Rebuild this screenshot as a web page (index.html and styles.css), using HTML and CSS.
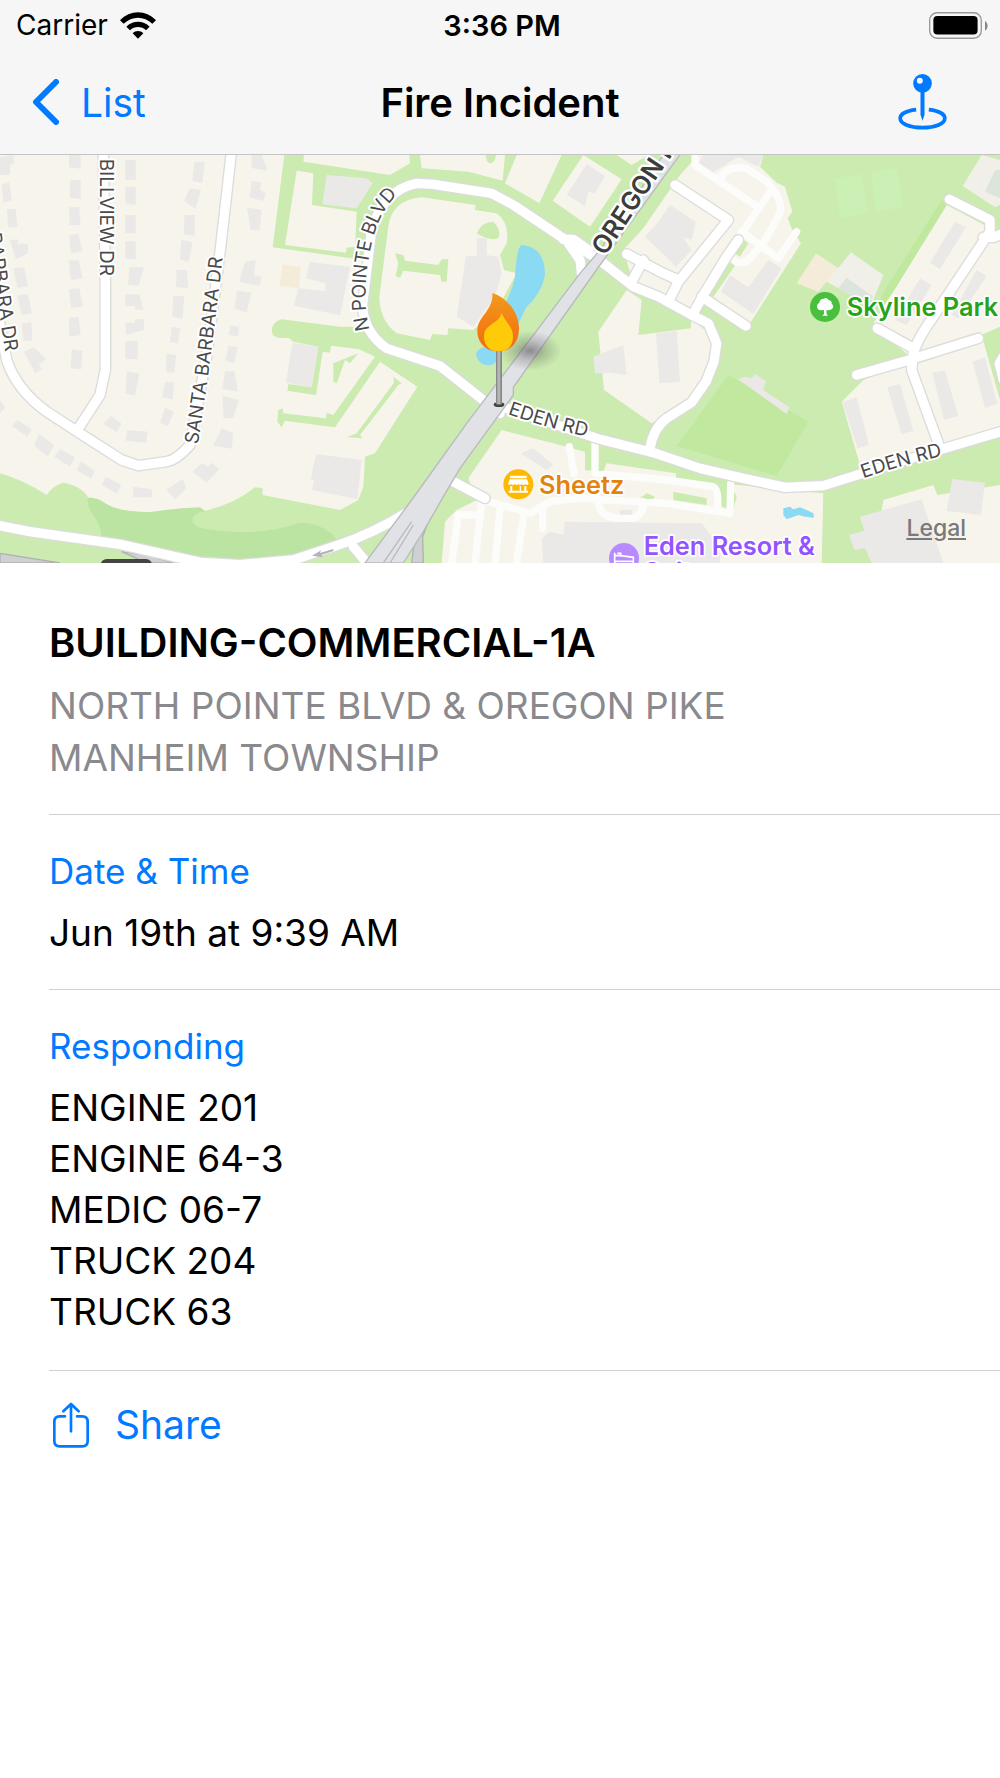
FILE: index.html
```html
<!DOCTYPE html>
<html lang="en">
<head>
<meta charset="utf-8">
<meta name="viewport" content="width=device-width, initial-scale=1">
<title>Fire Incident</title>
<link rel="stylesheet" href="styles.css">
</head>
<body>
<header class="top">
  <div class="status">
    <span class="carrier">Carrier
      <svg class="wifi" viewBox="0 0 108 80" aria-hidden="true"><path d="M0 24C30-8 78-8 108 24L97 35C72 11 36 11 11 35ZM19 44C38 24 70 24 89 44L78 54C64 41 44 41 30 54ZM38 63C47 54 61 54 70 63L54 80Z"/></svg>
    </span>
    <time class="clock">3:36 PM</time>
    <svg class="battery" viewBox="0 0 176 80" role="img" aria-label="Battery full"><rect x="2" y="2" width="154" height="76" rx="22" fill="none" stroke="#999" stroke-width="4"/><rect x="13" y="12" width="132" height="55" rx="12"/><path d="M167 26Q175 32 175 41T167 56Z" fill="#888"/></svg>
  </div>
  <nav class="bar">
    <a class="back" href="#list"><svg class="chevron" viewBox="0 0 27 46" aria-hidden="true"><path d="M24 3L4 23L24 43"/></svg>List</a>
    <h1 class="title">Fire Incident</h1>
    <button class="locate" type="button" aria-label="Show pin on map"><svg viewBox="0 0 146 168" aria-hidden="true"><path d="M54 107C20 111 6 122 6 133C6 149 34 161 73 161S140 149 140 133C140 122 126 111 92 107" fill="none" stroke="currentColor" stroke-width="11"/><path d="M67 52H79V122L73 140L67 122Z"/><circle cx="73" cy="28" r="28"/><circle cx="65" cy="20" r="9" fill="#f6f6f6"/></svg></button>
  </nav>
</header>

<main>
<section class="map" aria-label="Incident map">
<svg class="canvas" viewBox="0 15 3000 1224" preserveAspectRatio="xMidYMid slice">
  <defs>
    <g id="streets">
      <path d="M695 0L662 290L620 620L570 885Q530 930 500 935L415 947L365 930L240 850L140 785Q50 720 20 630L-20 420"/>
      <path d="M310 0L316 400V660L300 735L232 840"/>
      <path d="M-10 1125L90 1145L360 1183L600 1237L720 1244L880 1230L1010 1187Q1120 1150 1225 1085L1260 1050"/>
      <path d="M1500 790L1320 648L1160 595Q1095 550 1087 470L1115 240Q1150 120 1250 100L1300 103L1475 130L1540 165L1690 265L1790 325L1830 355L1900 410L1975 440L2075 495L2125 520L2150 580L2142 635L2118 695L2075 757L2000 805Q1960 835 1950 895"/>
      <path d="M1460 755L1550 785L1800 868L1960 908L2100 955L2230 985L2355 1012L2470 1007L2700 935L3020 840"/>
      <path d="M1690 268L1720 268L1765 300M1705 280L1740 330L1745 370"/>
      <path d="M1880 312L1990 370L2035 390M1930 330L1895 395M2025 105L2185 210L2035 395L2010 445M2215 270L2180 320L2110 435L2080 490M2105 440L2238 528"/>
      <path d="M2848 148L2970 210V245L2800 500Q2750 570 2740 610L2735 660L2815 880M2632 535L2740 595M2570 675L2720 632L2935 565M2950 262H2980L3010 250M3010 620L2998 640L3010 690"/>
      <path d="M1360 995L1455 1045M1060 1190L1110 1250"/>
    </g>
    <g id="lanes">
      <path d="M2085 20V45L2160 95L2265 165M2160 95Q2170 45 2240 55L2300 95Q2350 145 2340 190L2290 280L2240 335Q2210 345 2190 320M2315 120L2190 300M2225 245L2335 325L2390 245"/>
      <path d="M1450 1050L1590 1090L1650 1055L1740 1045L2000 1060L2190 1090L2192 1000M1785 880V970L2000 990L2140 1010Q2160 1020 2150 1085M1708 890L1722 970M1445 1055L1425 1240M1500 1080L1485 1240M1570 1100L1550 1240M1430 1095H1375L1355 1240M1628 1080V1135M1790 1040Q1795 1105 1860 1105H1900Q1930 1095 1930 1055"/>
    </g>
    <path id="pointe" d="M1108 540Q1080 420 1120 260Q1155 145 1230 108"/>
    <path id="barbara" d="M593 884Q625 700 672 288"/>
    <path id="barbara-west" d="M-70 0Q-15 420 16 606"/>
    <path id="oregon" d="M1815 320L2060 -50"/>
    <path id="eden-west" d="M1523 792Q1640 834 1780 865"/>
    <path id="eden-east" d="M2590 985Q2720 940 2840 915"/>
    <linearGradient id="flame" x1="0" y1="0" x2="0" y2="1"><stop offset="0" stop-color="#f29a1c"/><stop offset="1" stop-color="#f26a10"/></linearGradient>
    <radialGradient id="shade"><stop offset="0" stop-color="#444" stop-opacity=".55"/><stop offset=".5" stop-color="#555" stop-opacity=".25"/><stop offset="1" stop-color="#555" stop-opacity="0"/></radialGradient>
  </defs>

  <rect class="land" width="3000" height="1260"/>
  <path class="grass" d="M853 15L818 292L1108 332L1100 530L1020 530L845 508Q815 515 815 545Q818 568 865 563L880 575L955 590L935 712L865 702L862 722L948 735L968 605L990 608L993 587L1075 597L1125 620L1000 795L980 788L978 805L850 790L848 775L835 780L832 815L845 832L855 812L1005 832L1140 635L1252 710L1125 910L1095 920L1090 1010L1075 1050L1020 1080L787 1035L788 1015L765 1012Q700 1065 610 1083L445 1087L350 1080L300 1050L265 1045Q250 1010 190 998Q160 1005 140 1035Q70 990 0 970V1239H3000V15Z"/>
  <path class="wood" d="M262 1045Q270 1038 300 1050Q340 1085 445 1087Q520 1075 600 1072L615 1083Q580 1090 577 1110Q580 1135 640 1140Q780 1160 900 1118Q980 1120 1010 1175L900 1220L600 1230L305 1160Q300 1120 280 1095Q262 1070 262 1045ZM990 1145L1015 1175L990 1190Z"/>

  <g class="land" transform="translate(990)">
    <path d="M-78 15L-80 35L180 75L240 40L238 15ZM-100 62L-50 70L-54 165L80 185L75 290L50 293L48 308L-135 285ZM270 15H525L518 92L415 65L275 55ZM560 15H695L628 160L525 100ZM760 15L875 88L780 230L668 152ZM860 15H955L905 45Z"/>
    <path d="M275 142L437 165L435 180L500 190Q540 220 530 280L510 315L522 360L560 370L500 480L430 540L355 535L352 555L307 552L300 570L200 550Q148 510 148 440L175 230Q185 150 275 142Z"/>
    <path d="M890 420L935 450L925 555L1083 535V505L1160 570L1150 640L1090 745L965 820L822 720L805 545Z"/>
    <path d="M515 840L670 880L765 905V960L1480 1030L1475 1239H335L345 1115L380 1080L440 1050L415 985Z"/>
  </g>
  <g class="land" transform="translate(1980)">
    <path d="M-110 300L-50 235L60 75L115 15H310L300 50L350 98L375 110L397 185L383 205L395 235L423 280L270 520L160 440L95 490L-80 400Z"/>
    <path d="M860 165L1020 250V530L965 555L1020 750V850L600 945L545 755L610 690L760 630L640 520Z"/>
    <path d="M670 1050L820 1005L832 1035L1020 1005V1239H640Z"/>
  </g>
  <g class="grass">
    <path d="M1185 310L1210 315L1215 332L1315 345L1325 328L1345 328L1340 395H1325L1320 375L1210 362L1200 383L1187 378L1195 340ZM1430 250Q1445 215 1480 215Q1505 240 1495 265Q1470 275 1430 250ZM1458 15H1488Q1485 40 1470 40Q1458 38 1458 15ZM1790 900L2190 1000L2210 1040L2200 1080L2165 1070L2160 1020L1800 965Z"/>
    <path d="M2100 430L2185 320L2210 340L2140 440ZM2195 305L2220 262L2245 280L2220 320ZM1900 1060L1940 1030L1965 1040L1945 1060ZM2020 1025L2120 1045V1065L2020 1050Z"/>
    <path d="M1000 640L1075 610L1050 640L1035 630L1010 700L1000 695ZM1180 680L1205 700L1195 705L1080 855L1088 865L1040 862L1070 850L1182 698Z"/>
  </g>
  <path class="land" d="M1820 940L2028 970V985L1810 965Z"/>
  <g class="field"><path d="M2185 675L2425 815L2330 978L2030 888ZM2825 150L2840 165L2680 425L2640 480L2645 435Z"/></g>
  <path class="court" d="M2505 85L2583 72L2605 190L2520 203ZM2612 68L2690 55L2710 172L2628 184Z"/>
  <path class="sand" d="M2448 310L2520 358L2480 395L2455 425L2390 400ZM848 343L902 350L897 415L838 408Z"/>
  <path class="plaza" d="M2553 307L2650 375L2620 450L2580 450L2480 395ZM2945 15L3000 30V165L2985 172L2888 108Z"/>
  <path class="pool" d="M2540 383L2620 440L2600 460L2515 415ZM2985 60H3000V145L2955 125Z"/>

  <g class="house">
    <path d="M0 22L41 15V42L30 44V75H0ZM4 105L28 97L35 150L11 158ZM20 177H47L53 230L25 233ZM30 270L55 268L52 285L62 280L84 283V310L48 328ZM40 355L72 352L84 408L52 413ZM52 436L84 433L96 490L65 495ZM65 520L94 517L97 572H70ZM72 605L102 592L138 627L116 643L126 658L105 670ZM0 750L16 772L0 790ZM52 810L95 838L82 860L36 828ZM117 852L162 885L143 920L102 885ZM180 897L224 922L210 950L163 920ZM243 933L284 962L274 986L230 960ZM318 980L364 1005L350 1030L304 1005ZM400 1010L456 1018V1042H400Z"/>
    <path d="M207 15H242V56L207 52ZM210 90H242V147L209 143ZM207 172L237 171L242 226L209 225ZM207 257L235 250L248 303L213 310ZM206 332L236 330L248 385L213 390ZM207 418L238 415L248 470L213 474ZM206 503L236 500L242 555L209 560ZM216 598L248 603L243 658L211 655ZM376 30H407V90H376ZM376 110H407V165L376 160ZM376 195H407V250H376ZM376 274H407V328H376ZM388 352H432L415 407L384 404ZM376 433H418L431 480L404 477V468H376ZM376 517L405 520V508H432V540L378 555ZM376 573H413V628H376ZM381 665L418 670L405 737L376 730ZM333 798L364 820L350 847L310 822ZM381 840L443 845L438 878L377 872Z"/>
    <path d="M584 36H614L607 98L577 93ZM570 115L603 120L586 176L552 152ZM553 195H584V257L552 253ZM544 270L577 277L566 337L540 328ZM530 360H560L565 415L528 411ZM520 438H553L547 507L516 500ZM515 530L541 535L534 580L510 577ZM500 611L529 615L523 668L498 665ZM495 695L522 698L518 748L487 742ZM495 773L522 785L503 829L480 818ZM548 987L558 1015L525 1048L499 1020ZM605 939L625 950L635 938L657 957L620 998L578 965Z"/>
    <path d="M755 15H785L803 62L755 54ZM755 92L784 97L780 120L798 130L790 153L748 142ZM741 172L785 180L779 240H752ZM735 335L767 330L762 375L785 380L780 408L718 395ZM711 422L754 428L740 488L704 475ZM692 525L717 530L714 560L686 554ZM685 587L713 592L702 640L677 632ZM675 664H704L713 724L667 718ZM668 738L717 750L699 804H670ZM665 835L700 850L695 896L639 887ZM980 75L1100 85L1118 100L1070 175L967 163ZM930 336L1050 350L1020 495L882 468L895 415L975 424L978 400L918 385ZM877 578L955 590L935 712L858 698ZM948 912L1085 930L1072 1048L936 1020L942 990L932 987Z"/>
    <path d="M1430 265H1460V315L1495 320L1505 370L1485 440L1420 530L1370 500L1398 318H1430ZM1760 42L1815 78L1785 130L1765 125L1755 168L1700 135ZM1780 620L1870 585L1880 675L1830 668L1785 670ZM1968 550L2030 543L2040 695L1978 700ZM1600 895L1660 945L1640 960L1562 910ZM990 350L1047 355L1020 495L990 490Z"/>
    <path d="M2010 165L2087 215L2075 270L2050 262L2075 300L2028 350L1935 260L1975 215ZM2190 375L2245 412L2305 330L2345 355L2260 492L2163 425ZM2110 15H2290L2275 50L2215 20L2138 68L2095 40ZM1625 1165L1650 1145L1690 1155L1695 1115L2105 1120L2160 1190V1239H1630ZM1860 1080H1895V1130H1860Z"/>
    <path d="M2865 215L2898 232L2820 357L2790 338ZM2760 385L2795 405L2720 525L2685 510ZM2930 360L2960 378L2875 505L2855 495ZM2527 755L2570 742L2607 885L2573 895ZM2662 712L2700 702L2740 842L2705 853ZM2797 668L2835 662L2875 798L2832 810ZM2918 635L2955 622L2992 762L2955 773ZM2235 680L2255 685L2265 672L2297 693L2290 720L2368 772L2360 792L2215 688ZM2580 1100L2765 1048L2830 1239H2615L2595 1195L2563 1200L2548 1155L2593 1142ZM2857 987L2955 998L2942 1095L2840 1083Z"/>
  </g>
  <path class="water" d="M1565 285Q1635 290 1635 375Q1625 430 1580 470L1550 530L1505 480Q1535 430 1545 380Q1550 290 1565 285ZM1428 610Q1445 580 1500 590V625Q1475 655 1450 643Q1430 635 1428 610ZM2350 1075L2370 1070L2380 1078L2400 1072L2420 1080L2440 1090L2442 1103L2415 1100L2395 1095L2360 1108L2350 1095Z"/>

  <use href="#lanes" class="lane"/>
  <path class="ramp" d="M1245 1160L1235 1239H1270L1268 1160L1310 1050ZM0 1210L180 1239H0ZM365 1205L440 1215L520 1239H440Z"/>
  <use href="#streets" class="street-edge"/>
  <use href="#streets" class="street"/>
  <path class="trunk" d="M1095 1239L1235 1050L1400 820L1740 370L1800 300L2000 0L2050 0L1800 345L1540 712V735L1380 955L1330 1040L1270 1145L1210 1239ZM1150 1239L1235 1115M1170 1239L1240 1125"/>
  <path class="arrow" d="M1000 1197L960 1209L963 1201L936 1217L969 1222L964 1215L1000 1203Z"/>
  <rect x="302" y="1227" width="154" height="40" rx="18" fill="#444"/>

  <g class="road-name">
    <text transform="translate(300 26) rotate(90)">BILLVIEW DR</text>
    <text><textPath href="#barbara">SANTA BARBARA DR</textPath></text>
    <text><textPath href="#barbara-west" startOffset="100%" text-anchor="end">BARBARA DR</textPath></text>
    <text><textPath href="#pointe">N POINTE BLVD</textPath></text>
    <text><textPath href="#eden-west">EDEN RD</textPath></text>
    <text><textPath href="#eden-east">EDEN RD</textPath></text>
  </g>
  <text class="route-name"><textPath href="#oregon">OREGON PIKE</textPath></text>

  <ellipse cx="1590" cy="602" rx="95" ry="60" fill="url(#shade)"/>
  <ellipse cx="1497" cy="764" rx="16" ry="7" fill="#444"/>
  <rect x="1488" y="595" width="18" height="168" fill="#888"/><rect x="1492" y="595" width="9" height="168" fill="#b5b5b5"/>
  <path fill="url(#flame)" d="M1477 429C1525 445 1557 490 1557 535C1557 580 1530 604 1495 604C1460 604 1432 580 1432 542C1432 500 1482 480 1477 429Z"/>
  <path fill="#ffcb08" d="M1505 489C1516 517 1539 530 1539 560C1539 590 1520 604 1496 604C1470 604 1452 588 1452 560C1452 520 1495 525 1505 489Z"/>

  <g class="place">
    <circle cx="1555" cy="1003" r="45" fill="#ffb800"/>
    <path fill="#fff" d="M1530 977H1580V985H1530ZM1529 988H1581L1586 1001Q1581 1008 1576 1002Q1570 1008 1565 1002Q1560 1008 1555 1002Q1550 1008 1545 1002Q1539 1008 1534 1002Q1529 1008 1524 1001ZM1531 1009H1537V1022H1559V1009H1563V1022H1573V1009H1579V1022H1584V1028H1526V1022H1531Z"/>
    <text x="1617" y="1031" fill="#e2830e">Sheetz</text>
    <circle cx="2475" cy="471" r="45" fill="#48bf3d"/>
    <path fill="#fff" d="M2472 492V480Q2450 484 2451 468Q2452 460 2458 458Q2460 446 2471 446Q2480 440 2486 450Q2496 452 2495 461Q2502 466 2498 475Q2492 483 2479 480L2480 492L2484 497H2467Z"/>
    <text x="2540" y="499" fill="#27a31a">Skyline Park</text>
    <circle cx="1872" cy="1224" r="45" fill="#b78aff"/>
    <path d="M1844 1208V1242M1844 1234H1900V1222L1862 1217H1844M1852 1210H1862V1220M1900 1222V1242" fill="none" stroke="#fff" stroke-width="5"/>
    <text x="1931" y="1215" fill="#9254ff">Eden Resort &amp;</text>
    <text x="1931" y="1294" fill="#9254ff">Suites</text>
  </g>
</svg>
<a class="legal" href="#legal">Legal</a>
</section>

<article class="details">
  <section class="block">
    <h2 class="kind">BUILDING-COMMERCIAL-1A</h2>
    <p class="where">NORTH POINTE BLVD &amp; OREGON PIKE<br>MANHEIM TOWNSHIP</p>
  </section>
  <section class="block">
    <h3 class="label">Date &amp; Time</h3>
    <p class="value">Jun 19th at 9:39 AM</p>
  </section>
  <section class="block">
    <h3 class="label">Responding</h3>
    <ul class="value units"><li>ENGINE 201</li><li>ENGINE 64-3</li><li>MEDIC 06-7</li><li>TRUCK 204</li><li>TRUCK 63</li></ul>
  </section>
  <button class="share" type="button"><svg viewBox="0 0 108 136" aria-hidden="true"><path d="M36 42H20Q4 42 4 58V116Q4 132 20 132H88Q104 132 104 116V58Q104 42 88 42H72M54 87V6M31 27L54 5L77 27"/></svg>Share</button>
</article>
</main>
</body>
</html>
```
FILE: styles.css
```css
* { box-sizing: border-box; margin: 0; padding: 0; }
body { background: #fff; color: #000; font-family: Inter, "Liberation Sans", sans-serif; }
a { color: inherit; text-decoration: none; }
button { background: none; border: 0; color: #007aff; font: inherit; }
svg { display: block; }
ul { list-style: none; }

.top { background: #f6f6f6; border-bottom: 1px solid #c4c4c4; }
.status { display: grid; grid-template-columns: 1fr auto 1fr; align-items: center; height: 50px; padding: 0 12px 0 16px; font-size: 28px; }
.carrier { display: flex; align-items: center; gap: 12px; }
.wifi { width: 36px; height: 27px; }
.clock { font-size: 29px; font-weight: 600; }
.battery { width: 59px; height: 27px; justify-self: end; }
.bar { display: grid; grid-template-columns: 1fr auto 1fr; align-items: center; height: 104px; padding: 0 32px; font-size: 39px; }
.back { display: flex; align-items: center; gap: 22px; color: #007aff; }
.chevron { width: 27px; height: 46px; fill: none; stroke: #007aff; stroke-width: 6; stroke-linecap: round; stroke-linejoin: round; }
.title { font-size: 40px; font-weight: 600; }
.locate { justify-self: end; padding-right: 21px; }
.locate svg { width: 49px; height: 56px; fill: currentColor; }

.map { position: relative; }
.canvas { width: 100%; height: 408px; }
.land { fill: #f7f4eb; }
.grass { fill: #cbebb0; }
.wood { fill: #bbe3a2; }
.field { fill: #c1e89f; }
.court { fill: #cbf0b5; }
.sand { fill: #f4ecd8; }
.plaza { fill: #f0f0e9; }
.pool { fill: #dde4dc; }
.house { fill: #ebe9e7; }
.water { fill: #8bdaf4; }
.lane { fill: none; stroke: #fcfcfb; stroke-width: 22; stroke-linecap: round; stroke-linejoin: round; }
.street-edge { fill: none; stroke: #dbdcdb; stroke-width: 36; stroke-linecap: round; stroke-linejoin: round; }
.street { fill: none; stroke: #fff; stroke-width: 28; stroke-linecap: round; stroke-linejoin: round; }
.trunk { fill: #e1e2e6; stroke: #b9babd; stroke-width: 4; }
.ramp { fill: #cfd0d2; stroke: #b0b1b3; stroke-width: 4; }
.arrow { fill: #b3b3b3; }
.road-name { font-size: 57px; fill: #4a4a4a; stroke: #fff; stroke-width: 12; stroke-linejoin: round; paint-order: stroke; }
.route-name { font-size: 76px; font-weight: 600; fill: #3c3c3c; stroke: #fff; stroke-width: 14; stroke-linejoin: round; paint-order: stroke; }
.place { font-size: 76px; font-weight: 600; }
.place text { stroke: #fff; stroke-width: 10; stroke-linejoin: round; paint-order: stroke; }
.legal { position: absolute; right: 34px; bottom: 20px; color: #797979; font-size: 23px; font-weight: 500; line-height: 30px; text-decoration: underline; }

.details { padding: 51px 0 0 49px; }
.block { padding-bottom: 30px; border-bottom: 1px solid #d0d0d2; }
.block + .block { padding-top: 30px; }
.kind { font-size: 40px; font-weight: 600; line-height: 58px; }
.where { padding-top: 8px; color: #8a8a8e; font-size: 37px; line-height: 52px; }
.label { color: #007aff; font-size: 35px; font-weight: 400; line-height: 52px; }
.value { padding-top: 10px; font-size: 37px; line-height: 52px; }
.units { padding-bottom: 3px; line-height: 51px; }
.share { display: flex; align-items: center; gap: 26px; padding: 30px 4px; font-size: 39px; line-height: 48px; }
.share svg { width: 36px; height: 46px; fill: none; stroke: currentColor; stroke-width: 8; stroke-linecap: round; stroke-linejoin: round; }
```
